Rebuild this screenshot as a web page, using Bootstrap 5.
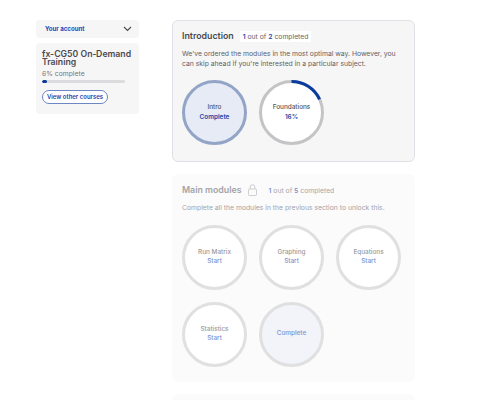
<!DOCTYPE html>
<html lang="en">
<head>
    <meta charset="UTF-8" />
    <meta name="viewport" content="width=device-width, initial-scale=1" />
    <title>fx-CG50 On-Demand Training</title>
    <link href="https://cdn.jsdelivr.net/npm/bootstrap@5.3.0/dist/css/bootstrap.min.css" rel="stylesheet">
    <style>
        html, body { height: 400px; overflow: hidden; }
        body {
            background: #fff;
            color: #55555a;
            font-family: Inter, "Liberation Sans", sans-serif;
            font-size: 7px;
            line-height: 10px;
        }
        .page-wrap { padding: 20px 65px 0 36px; gap: 33px; }
        .side-col { width: 103px; flex: none; }
        .main-col { width: 243px; flex: none; }
        .account-bar {
            height: 18px;
            background: #f6f6f7;
            padding: 0 7px 0 9px;
            margin-bottom: 5px;
            color: #1b48b8;
            font-size: 6.1px;
            font-weight: 700;
        }
        .course-box { height: 71px; background: #f6f6f7; padding: 6px 4px 0 6px; }
        .course-title { font-size: 8.7px; line-height: 8px; font-weight: 600; color: #4a4a50; margin: 0 0 3px; padding-top: 1px; }
        .course-pct { font-size: 6.8px; line-height: 9px; color: #77777c; margin-bottom: 2px; }
        .course-bar { height: 3px; width: 83px; background: #dcdcde; border-radius: 2px; margin-bottom: 7px; }
        .course-bar .progress-bar { background: #0a3a9c; border-radius: 2px; }
        .courses-btn {
            height: 14px;
            width: 66px;
            padding: 0;
            font-size: 6px;
            line-height: 12px;
            font-weight: 600;
            color: #1f45a8;
            background: #fff;
            border: 1px solid #6d86c4;
            border-radius: 7px;
        }
        .module-panel { background: #f6f6f7; border: 1px solid #dfe1e6; border-radius: 6px; height: 142px; padding: 9px 9px 0; margin-bottom: 12px; }
        .panel-faded { background: #fbfbfc; border: 0; height: 208px; padding: 10px 10px 0; margin-bottom: 12px; }
        .panel-head { height: 12px; gap: 6px; margin-bottom: 7px; }
        .panel-title { font-size: 8.8px; font-weight: 600; color: #4a4a50; margin: 0; line-height: 12px; }
        .panel-count { background: #fff; padding: 0 3px; line-height: 11px; color: #66666b; font-size: 6.8px; }
        .panel-count b { color: #1f45a8; font-weight: 600; }
        .panel-text { font-size: 6.8px; line-height: 9.5px; margin: 0 0 12px; color: #616166; width: 225px; }
        .ring-row { gap: 12px; }
        .ring-item {
            width: 65px;
            height: 65px;
            border: 3px solid #c4c4c6;
            border-radius: 50%;
            background: #fff;
            position: relative;
            font-size: 6.4px;
            line-height: 9.5px;
            font-weight: 500;
        }
        .ring-item span { color: #1f45a8; font-weight: 600; }
        .ring-done { background: #e6ebf6; border-color: #93a5c6; }
        .ring-arc { position: absolute; top: -3px; left: -3px; }
        .panel-faded .panel-title { color: #a4a4a7; }
        .panel-faded .panel-count { background: none; color: #a6a6a9; margin-left: 3px; }
        .panel-faded .panel-count b { color: #7a93cf; }
        .panel-faded .panel-text { color: #a4a4a7; margin-bottom: 12px; width: auto; }
        .panel-faded .ring-row { row-gap: 12px; }
        .panel-faded .ring-item { border-color: #e0e0e1; color: #9a9a9d; }
        .panel-faded .ring-item span { color: #7a93cf; font-weight: 500; }
        .panel-faded .ring-done { background: #f2f4fa; }
        .next-panel { height: 20px; background: #fbfbfc; border-radius: 6px; }
    </style>
</head>
<body>

<div class="page-wrap d-flex align-items-start">
    <div class="side-col">
        <div class="account-bar d-flex align-items-center justify-content-between rounded-1">
            <span>Your account</span>
            <svg width="9" height="6" viewBox="0 0 9 6" fill="none" stroke="#4a4a50" stroke-width="1.1"><path d="M1 1l3.5 3.5L8 1"/></svg>
        </div>
        <div class="course-box rounded-1">
            <h2 class="course-title">fx-CG50&nbsp;On&#8209;Demand Training</h2>
            <div class="course-pct">6% complete</div>
            <div class="progress course-bar">
                <div class="progress-bar" style="width: 6%"></div>
            </div>
            <button class="btn courses-btn d-block">View other courses</button>
        </div>
    </div>

    <div class="main-col">
        <section class="module-panel">
            <div class="panel-head d-flex align-items-center">
                <h3 class="panel-title">Introduction</h3>
                <div class="panel-count"><b>1</b> out of <b>2</b> completed</div>
            </div>
            <p class="panel-text">We've ordered the modules in the most optimal way. However, you can skip ahead if you're interested in a particular subject.</p>
            <div class="ring-row d-flex">
                <div class="ring-item ring-done d-flex flex-column align-items-center justify-content-center">Intro<span>Complete</span></div>
                <div class="ring-item d-flex flex-column align-items-center justify-content-center">
                    <svg class="ring-arc" width="65" height="65" viewBox="0 0 65 65" fill="none" stroke="#0a3a9c" stroke-width="3"><path d="M32.5 1.5A31 31 0 0 1 60.6 19.4"/></svg>
                    Foundations<span>16%</span>
                </div>
            </div>
        </section>

        <section class="module-panel panel-faded">
            <div class="panel-head d-flex align-items-center">
                <h3 class="panel-title">Main modules</h3>
                <svg width="9" height="12" viewBox="0 0 9 12" fill="none" stroke="#c4c4c6" stroke-width=".8"><rect x=".5" y="5" width="8" height="6.5" rx=".8"/><path d="M2.2 5V3a2.3 2.3 0 0 1 4.6 0v2"/></svg>
                <div class="panel-count"><b>1</b> out of <b>5</b> completed</div>
            </div>
            <p class="panel-text">Complete all the modules in the previous section to unlock this.</p>
            <div class="ring-row d-flex flex-wrap">
                <div class="ring-item d-flex flex-column align-items-center justify-content-center">Run Matrix<span>Start</span></div>
                <div class="ring-item d-flex flex-column align-items-center justify-content-center">Graphing<span>Start</span></div>
                <div class="ring-item d-flex flex-column align-items-center justify-content-center">Equations<span>Start</span></div>
                <div class="ring-item d-flex flex-column align-items-center justify-content-center">Statistics<span>Start</span></div>
                <div class="ring-item ring-done d-flex flex-column align-items-center justify-content-center"><span>Complete</span></div>
            </div>
        </section>

        <div class="next-panel"></div>
    </div>
</div>

</body>
</html>
